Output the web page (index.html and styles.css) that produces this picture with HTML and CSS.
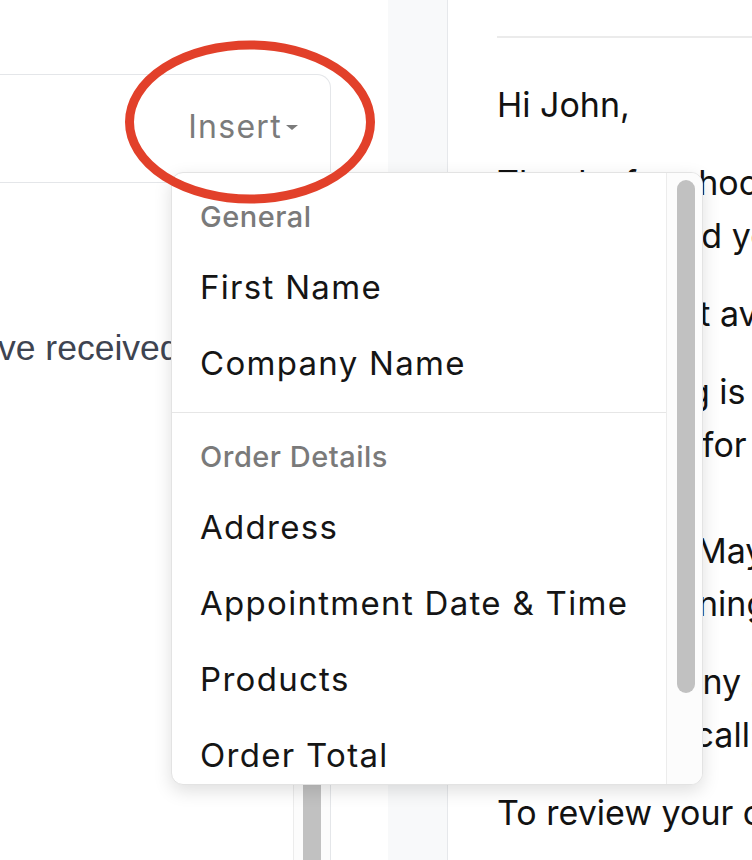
FILE: index.html
```html
<!DOCTYPE html>
<html lang="en">
<head>
<meta charset="utf-8">
<title>Email template editor – Insert menu</title>
<link rel="stylesheet" href="styles.css">
</head>
<body>
<div class="app">
  <div class="left">
    <div class="editor">
      <div class="toolbar">
        <button class="insert">Insert<span class="caret"></span></button>
      </div>
      <div class="editor-body">
        <div class="editor-text">
          <p class="draft">ve received your request and we will be in touch</p>
        </div>
        <div class="vscroll"><div class="vthumb"></div></div>
      </div>
    </div>
  </div>
  <div class="gutter"></div>
  <div class="right">
    <div class="right-head"></div>
    <div class="message">
      <p>Hi John,</p>
      <p>Thanks for choosing Sparkle Cleaning! We<br>have received your request and queued</p>
      <p>it for the next available date and time.</p>
      <p>Your booking is confirmed. Maria Lopez<br>will visit you for the appointment:<br>12 Main St<br>Tuesday, 14 May 10:00 / 2 hours,<br>window cleaning and gutter quote.</p>
      <p>If you have any questions, just reply to this<br>message or call our office directly.</p>
      <p>To review your order, click the link below.</p>
    </div>
  </div>

  <div class="dropdown">
    <div class="dd-list">
      <div class="dd-section">
        <div class="dd-head">General</div>
        <div class="dd-item">First Name</div>
        <div class="dd-item">Company Name</div>
      </div>
      <div class="dd-section">
        <div class="dd-head">Order Details</div>
        <div class="dd-item">Address</div>
        <div class="dd-item">Appointment Date &amp; Time</div>
        <div class="dd-item">Products</div>
        <div class="dd-item">Order Total</div>
      </div>
    </div>
    <div class="dd-scroll"><div class="dd-thumb"></div></div>
  </div>

  <svg class="highlight" width="262" height="176" viewBox="0 0 262 176" aria-hidden="true">
    <ellipse cx="130" cy="86" rx="120.5" ry="77" fill="none" stroke="#e2402a" stroke-width="9"/>
  </svg>
</div>
</body>
</html>
```

FILE: styles.css
```css
* {
  box-sizing: border-box;
}

html,
body {
  margin: 0;
  padding: 0;
  background: #ffffff;
}

.app {
  position: relative;
  display: flex;
  width: 752px;
  height: 860px;
  overflow: hidden;
  background: #ffffff;
}

/* ---------- left editor ---------- */
.left {
  width: 388px;
  flex: none;
  padding-top: 74px;
  background: #ffffff;
}

.editor {
  width: 331px;
  height: 786px;
  display: flex;
  flex-direction: column;
  border-top: 1px solid #e4e6e9;
  border-right: 1px solid #e4e6e9;
  border-top-right-radius: 14px;
}

.toolbar {
  height: 108px;
  flex: none;
  display: flex;
  justify-content: flex-end;
  align-items: center;
  padding-right: 32px;
  border-bottom: 1px solid #e4e6e9;
}

.insert {
  display: flex;
  align-items: center;
  padding: 0 0 4px 0;
  margin: 0;
  border: none;
  background: none;
  font-family: "Inter", "Noto Sans", sans-serif;
  font-size: 32px;
  letter-spacing: 1.3px;
  color: #7b7b7b;
}

.caret {
  width: 0;
  height: 0;
  margin-left: 4px;
  margin-top: 2px;
  border-left: 6px solid transparent;
  border-right: 6px solid transparent;
  border-top: 5px solid #7b7b7b;
}

.editor-body {
  flex: 1;
  display: flex;
  min-height: 0;
}

.editor-text {
  flex: 1;
  overflow: hidden;
  padding-top: 145px;
}

.draft {
  margin: 0 0 0 -2px;
  white-space: nowrap;
  font-family: "Liberation Sans", Arial, sans-serif;
  font-size: 35.5px;
  line-height: 40px;
  color: #3e4451;
}

.vscroll {
  width: 37px;
  flex: none;
  padding-left: 9px;
  border-left: 1px solid #ececec;
  background: #fcfcfc;
}

.vthumb {
  width: 18px;
  height: 600px;
  margin-top: 300px;
  border-radius: 9px;
  background: #c1c1c1;
}

/* ---------- gutter ---------- */
.gutter {
  width: 60px;
  flex: none;
  background: #f8f9fa;
  border-right: 1px solid #e6e8eb;
}

/* ---------- right preview ---------- */
.right {
  flex: 1;
  min-width: 0;
  padding-left: 49px;
  overflow: hidden;
}

.right-head {
  height: 38px;
  border-bottom: 2px solid #ebebeb;
}

.message {
  padding-top: 40px;
  font-family: "Inter", "Noto Sans", sans-serif;
  font-size: 34px;
  line-height: 53px;
  color: #121212;
  white-space: nowrap;
}

.message p {
  margin: 0 0 25px 0;
}

/* ---------- dropdown ---------- */
.dropdown {
  position: absolute;
  left: 171px;
  top: 172px;
  width: 532px;
  height: 613px;
  display: flex;
  background: #ffffff;
  border: 1px solid #e3e3e3;
  border-radius: 12px;
  overflow: hidden;
  box-shadow: 0 6px 18px rgba(0, 0, 0, 0.13);
  z-index: 2;
}

.dd-list {
  flex: 1;
  min-width: 0;
  overflow: hidden;
}

.dd-section {
  padding: 24px 0 11px 0;
}

.dd-section + .dd-section {
  border-top: 1px solid #e6e6e6;
}

.dd-head {
  height: 40px;
  margin-bottom: 12px;
  padding-left: 28px;
  font-family: "Inter", "Noto Sans", sans-serif;
  font-size: 29px;
  font-weight: 500;
  line-height: 40px;
  letter-spacing: 0.5px;
  color: #7a7a7a;
}

.dd-item {
  height: 76px;
  padding-left: 28px;
  font-family: "Inter", "Noto Sans", sans-serif;
  font-size: 33px;
  line-height: 76px;
  letter-spacing: 1.3px;
  color: #151515;
  white-space: nowrap;
}

.dd-scroll {
  width: 36px;
  flex: none;
  padding: 7px 0 0 10px;
  border-left: 1px solid #ececec;
  background: #fcfcfc;
}

.dd-thumb {
  width: 18px;
  height: 513px;
  border-radius: 9px;
  background: #c1c1c1;
}

/* ---------- annotation ---------- */
.highlight {
  position: absolute;
  left: 120px;
  top: 36px;
  z-index: 3;
}
```
